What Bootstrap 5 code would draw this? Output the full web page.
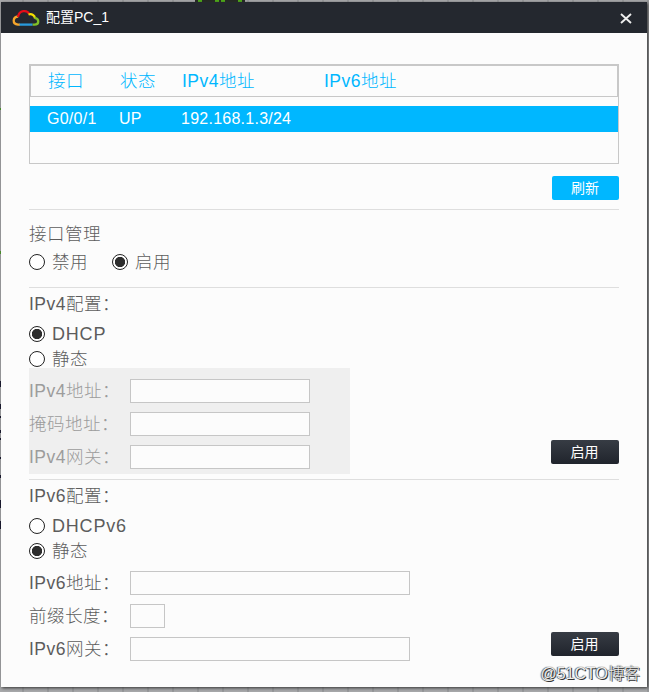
<!DOCTYPE html>
<html lang="zh-CN">
<head>
<meta charset="utf-8">
<meta name="viewport" content="width=device-width, initial-scale=1">
<title>配置PC_1</title>
<link rel="stylesheet" href="https://cdn.jsdelivr.net/npm/bootstrap@5.3.0/dist/css/bootstrap.min.css">
<style>
  body { height: 692px; padding: 2px 2px 5px 1px; overflow: hidden; position: relative;
    background: repeating-linear-gradient(90deg, #a8a9ab 0 22px, #989a9c 22px 24px, #a8a9ab 24px 25px);
    font-family: "Liberation Sans", "Noto Sans CJK SC", sans-serif; font-size: 17.5px; letter-spacing: .5px; line-height: 24px; color: #5c5c5c; font-weight: 300; }
  .backdrop-edge { position: absolute; inset: 0; width: 649px; height: 692px; }
  .dialog { position: relative; height: 685px; background: #fcfcfc; box-shadow: 1px 1px 3px #333; }
  .titlebar { height: 31px; padding: 0 13px 0 11px; background: #24282f; color: #fff; font-size: 14px; letter-spacing: 0; font-weight: 400; }
  .titlebar .caption { margin-left: 5px; margin-top: -1px; }
  .content-area { padding: 31px 28px 0 28px; }
  .iface-table { height: 100px; border: 1px solid #c8c8c8; }
  .iface-head { height: 33px; margin: -1px; border: 2px solid #c8c8c8; border-bottom-width: 1px; color: #00b7ff; }
  .iface-row { height: 26px; margin-top: 10px; background: #00b7ff; color: #fff; padding-left: 17px; font-size: 16px; letter-spacing: .25px; }
  .iface-grid { display: grid; grid-template-columns: 72px 62px 142px 1fr; align-items: center; }
  .iface-head.iface-grid { padding: 0 0 0 17px; }
  .act { display: block; width: 68px; height: 24px; padding: 0 1px 0 0; border: 0; border-radius: 2px; font-size: 14px; line-height: 24px; letter-spacing: 0; color: #fff; }
  .act-dark, .act-dark:hover { background: linear-gradient(#373c44, #20242c); color: #fff; }
  .act-blue, .act-blue:hover { width: 67px; background: #00b7ff; color: #fff; }
  .refresh { height: 45px; padding-top: 12px; }
  .panel { border-top: 1px solid #dedede; }
  .panel-admin { height: 78px; padding-top: 12px; }
  .panel-ip { height: 192px; padding-top: 4px; position: relative; }
  .panel-title { height: 24px; }
  .opt { height: 24px; margin-top: 6px; display: flex; align-items: center; gap: 7px; }
  .opt + .opt { margin-top: 1px; }
  .opt .latin { font-size: 18px; letter-spacing: .8px; }
  .opts-inline { height: 24px; margin-top: 4px; gap: 24px; }
  .opts-inline .opt { margin: 0; }
  .radio-dot { appearance: none; flex: none; width: 16px; height: 16px; margin: 0; border: 1px solid #222; border-radius: 50%; background: #fff; }
  .radio-dot:checked { background: radial-gradient(circle, #2d2d2d 0 4.8px, #fff 5.5px); }
  .fieldset-box { width: 321px; height: 106px; padding-top: 11px; margin-top: -3px; display: flex; flex-direction: column; gap: 9px; }
  .fieldset-off { background: #efefef; color: #9c9c9c; }
  .fld { display: grid; grid-template-columns: 101px auto; justify-content: start; height: 24px; }
  .fld input { height: 24px; width: 180px; border: 1px solid #c6c6c6; border-radius: 0; background: #fcfcfc; padding: 0 4px; }
  .fld input.wide { width: 280px; }
  .fld input.short { width: 35px; }
  .fld label { white-space: nowrap; height: 24px; }
  .colon { display: inline-block; }
  .corner { position: absolute; right: 0; top: 152px; }
  .sitemark { position: absolute; right: 9px; bottom: 6px; font-size: 16px; line-height: 24px; letter-spacing: 0; color: #eee; text-shadow: 1px 1px 0 #333, 0 0 1px #333, -1px 0 1px #777; }
</style>
</head>
<body>
<svg class="backdrop-edge" aria-hidden="true">
  <rect x="195" y="0" width="50" height="2" fill="#252a24"/>
  <path d="M198 1h4M215 1h4M221 1h4M238 1h4" stroke="#4dab18" stroke-width="2"/>
  <path d="M0 108v2M0 251v3" stroke="#4c9c28" stroke-width="2"/>
  <path d="M0 381v6M0 404v5M0 416v2M0 430v3M0 438v2M0 457v2M0 475v3M0 500v8M0 521v8" stroke="#14142c" stroke-width="2"/>
</svg>
<main class="dialog">
  <header class="titlebar d-flex align-items-center">
    <svg width="29" height="18" viewBox="0 0 29 18" fill="none" stroke-width="2.3" aria-hidden="true">
      <path d="M8 15.6H6C0 15 .5 8 6.2 7.5" stroke="#f5a52b"/>
      <path d="M6 8C7 1 15 .5 17.3 5" stroke="#e60c18"/>
      <path d="M16.5 5.500c3.500-1 6.300 .8 6.500 4" stroke="#f5df00"/>
      <path d="M22.500 8.800c5 .5 5 6.800 0 6.800h-2" stroke="#80bf28"/>
      <path d="M7.500 15.600h13" stroke="#299adc"/>
    </svg>
    <span class="caption">配置PC_1</span>
    <svg class="ms-auto" width="16" height="14" viewBox="0 0 16 14" role="button" aria-label="关闭"><path d="m3 3 10 9m0-9-10 9" stroke="#eee" stroke-width="1.9"/></svg>
  </header>
  <div class="content-area">
    <div class="iface-table">
      <div class="iface-head iface-grid"><span>接口</span><span>状态</span><span>IPv4地址</span><span>IPv6地址</span></div>
      <div class="iface-row iface-grid"><span>G0/0/1</span><span>UP</span><span>192.168.1.3/24</span><span></span></div>
    </div>
    <div class="refresh d-flex justify-content-end"><button class="btn act act-blue">刷新</button></div>
    <section class="panel panel-admin">
      <div class="panel-title">接口管理</div>
      <div class="opts-inline d-flex">
        <label class="opt"><input class="radio-dot" type="radio" name="admin"><span>禁用</span></label>
        <label class="opt"><input class="radio-dot" type="radio" name="admin" checked><span>启用</span></label>
      </div>
    </section>
    <section class="panel panel-ip">
      <div class="panel-title">IPv4配置<span class="colon">：</span></div>
      <label class="opt"><input class="radio-dot" type="radio" name="v4" checked><span class="latin">DHCP</span></label>
      <label class="opt"><input class="radio-dot" type="radio" name="v4"><span>静态</span></label>
      <div class="fieldset-box fieldset-off">
        <div class="fld"><label for="a4">IPv4地址<span class="colon">：</span></label><input id="a4" disabled></div>
        <div class="fld"><label for="m4">掩码地址<span class="colon">：</span></label><input id="m4" disabled></div>
        <div class="fld"><label for="g4">IPv4网关<span class="colon">：</span></label><input id="g4" disabled></div>
      </div>
      <button class="btn act act-dark corner">启用</button>
    </section>
    <section class="panel panel-ip">
      <div class="panel-title">IPv6配置<span class="colon">：</span></div>
      <label class="opt"><input class="radio-dot" type="radio" name="v6"><span class="latin">DHCPv6</span></label>
      <label class="opt"><input class="radio-dot" type="radio" name="v6" checked><span>静态</span></label>
      <div class="fieldset-box">
        <div class="fld"><label for="a6">IPv6地址<span class="colon">：</span></label><input id="a6" class="wide"></div>
        <div class="fld"><label for="p6">前缀长度<span class="colon">：</span></label><input id="p6" class="short"></div>
        <div class="fld"><label for="g6">IPv6网关<span class="colon">：</span></label><input id="g6" class="wide"></div>
      </div>
      <button class="btn act act-dark corner">启用</button>
    </section>
  </div>
</main>
<div class="sitemark">@51CTO博客</div>
<script src="https://cdn.jsdelivr.net/npm/bootstrap@5.3.0/dist/js/bootstrap.bundle.min.js"></script>
</body>
</html>
